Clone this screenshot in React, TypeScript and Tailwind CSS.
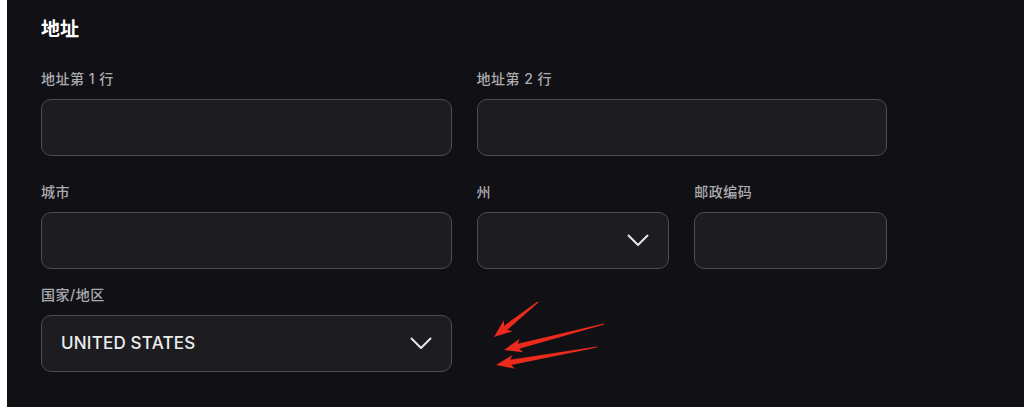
import React from "react";

const font = { fontFamily: '"Inter", "Noto Sans CJK SC", sans-serif' };

function Chevron() {
  return (
    <svg width="22" height="13" viewBox="0 0 22 13" fill="none" className="shrink-0">
      <polyline points="1.5,1.5 11,11 20.5,1.5" stroke="#e6e6e8" strokeWidth="2" strokeLinecap="round" strokeLinejoin="round" />
    </svg>
  );
}

function Field({ label, span, children }: { label: string; span: string; children?: React.ReactNode }) {
  return (
    <div className={span}>
      <div className="text-[14px] leading-[18px] font-medium tracking-[0.5px] text-[#acacb0] mb-[11px]">{label}</div>
      <div className="h-[57px] rounded-[10px] border border-[#4b4b50] bg-[#1d1d21] flex items-center justify-between px-[19px]">
        {children}
      </div>
    </div>
  );
}

function Arrows() {
  // hand-drawn red annotation arrows
  const arrow = (x1: number, y1: number, x2: number, y2: number) => {
    const dx = x2 - x1;
    const dy = y2 - y1;
    const len = Math.hypot(dx, dy);
    const ux = dx / len;
    const uy = dy / len;
    const nx = -uy;
    const ny = ux;
    const hb = 15; // head length
    const hw = 7; // head half width
    const bx = x2 - ux * hb;
    const by = y2 - uy * hb;
    const sw = 2.6;
    const pts = [
      [x1 + nx * 0.6, y1 + ny * 0.6],
      [bx + nx * sw, by + ny * sw],
      [bx + nx * hw - ux * 3, by + ny * hw - uy * 3],
      [x2, y2],
      [bx - nx * hw - ux * 3, by - ny * hw - uy * 3],
      [bx - nx * sw, by - ny * sw],
      [x1 - nx * 0.6, y1 - ny * 0.6],
    ];
    return pts.map((p) => p.join(",")).join(" ");
  };
  return (
    <svg width="130" height="90" viewBox="0 0 130 90" className="absolute left-[478px] top-[290px] pointer-events-none">
      <g fill="#ea2a1c">
        <polygon points={arrow(53, 12, 9, 47)} />
        <polygon points={arrow(119, 34, 19, 60)} />
        <polygon points={arrow(112, 57, 11, 75)} />
      </g>
    </svg>
  );
}

export default function App() {
  return (
    <div className="w-[1024px] h-[407px] bg-white flex overflow-hidden" style={font}>
      <div className="w-[7px] shrink-0" />
      <div className="relative flex-1 bg-[#111115] pl-[34px] pt-[17px]">
        <h2 className="text-[19px] leading-[26px] font-bold text-white">地址</h2>

        <div className="w-[846px] grid grid-cols-4 gap-x-[25px] mt-[27px]">
          <Field label="地址第 1 行" span="col-span-2" />
          <Field label="地址第 2 行" span="col-span-2" />
        </div>

        <div className="w-[846px] grid grid-cols-4 gap-x-[25px] mt-[27px]">
          <Field label="城市" span="col-span-2" />
          <Field label="州" span="col-span-1">
            <span />
            <Chevron />
          </Field>
          <Field label="邮政编码" span="col-span-1" />
        </div>

        <div className="w-[846px] grid grid-cols-4 gap-x-[25px] mt-[17px]">
          <Field label="国家/地区" span="col-span-2">
            <span className="text-[17px] font-medium text-[#ececee] tracking-[0.2px]">UNITED STATES</span>
            <Chevron />
          </Field>
        </div>

        <Arrows />
      </div>
    </div>
  );
}
